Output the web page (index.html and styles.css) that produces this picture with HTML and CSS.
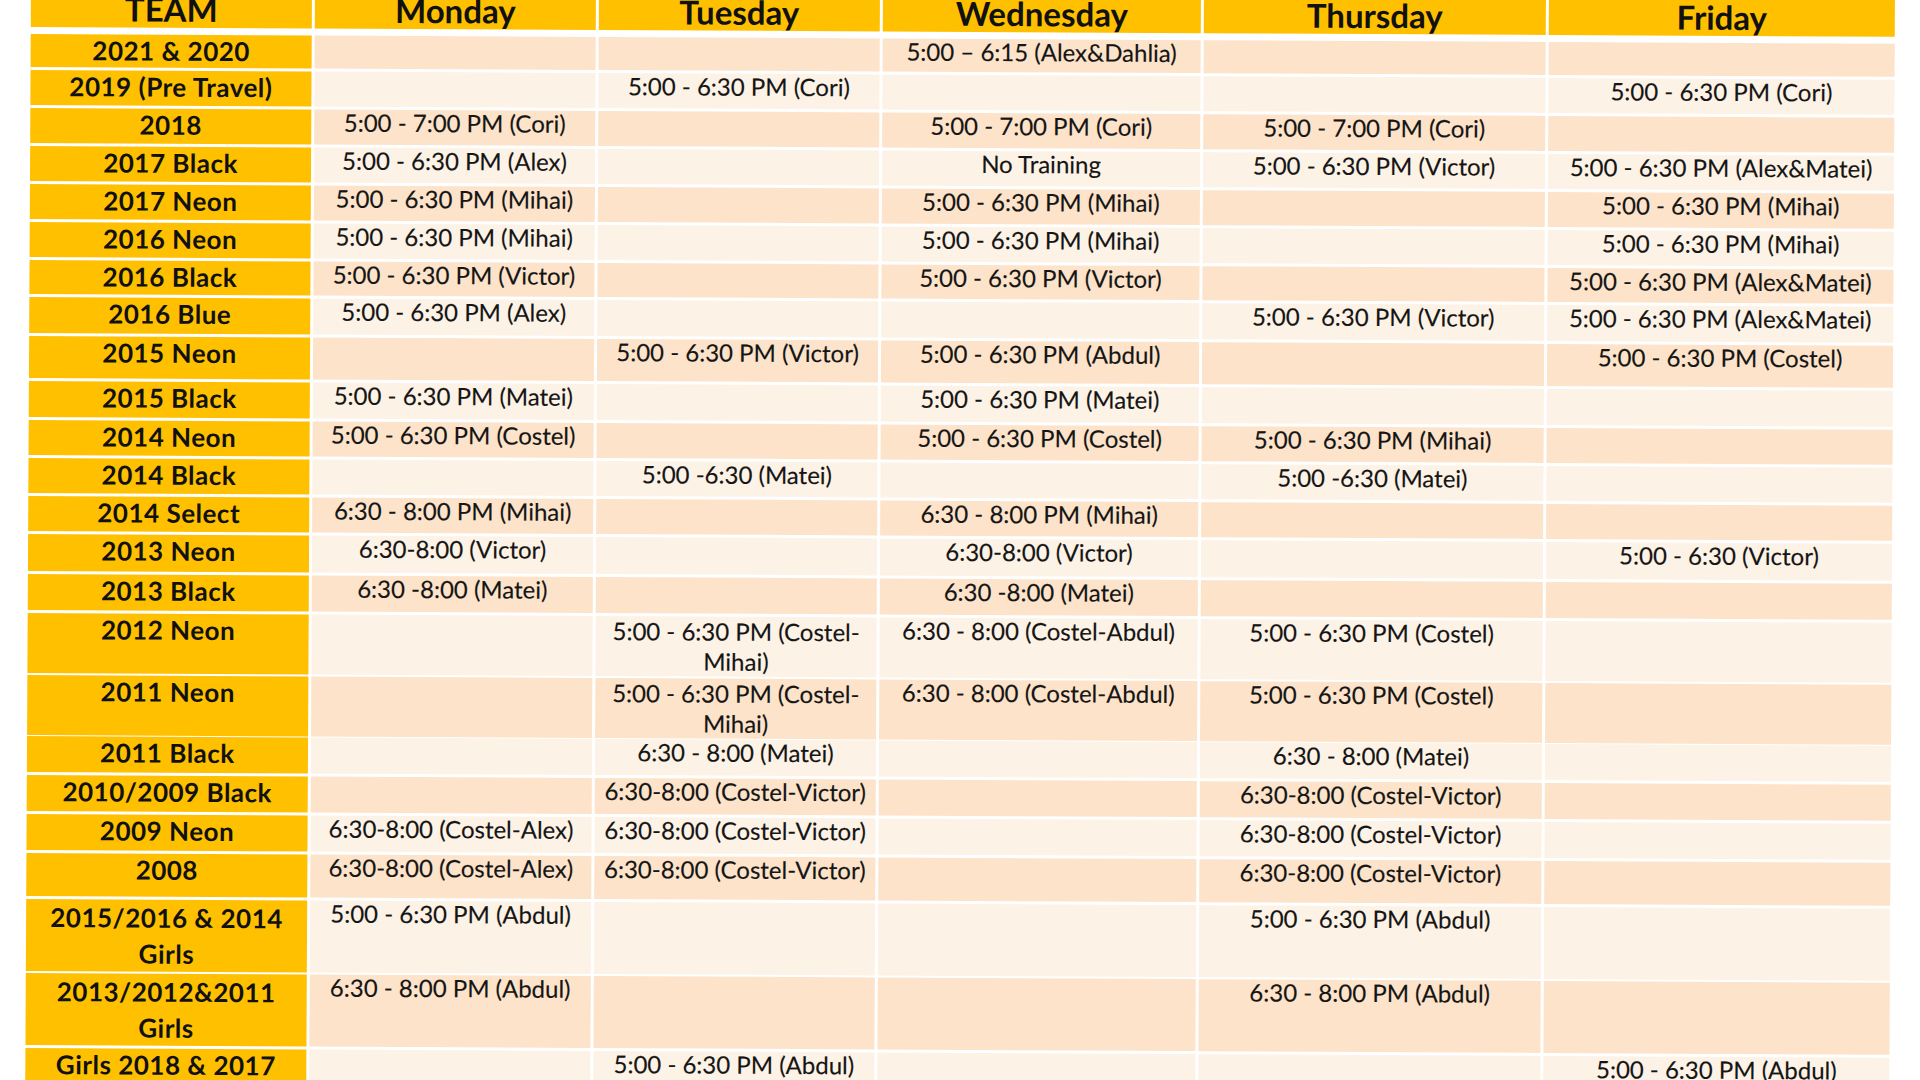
FILE: index.html
```
<!DOCTYPE html>
<html lang="en">
<head>
<meta charset="utf-8">
<title>Training Schedule</title>
<link rel="stylesheet" href="styles.css">
</head>
<body>
<div class="sheet">
  <div class="row head">
    <div class="cell">TEAM</div><div class="cell">Monday</div><div class="cell">Tuesday</div><div class="cell">Wednesday</div><div class="cell">Thursday</div><div class="cell">Friday</div>
  </div>
  <div class="row dark h33">
    <div class="cell team">2021 &amp; 2020</div><div class="cell"></div><div class="cell"></div><div class="cell">5:00 – 6:15 (Alex&amp;Dahlia)</div><div class="cell"></div><div class="cell"></div>
  </div>
  <div class="row light">
    <div class="cell team">2019 (Pre Travel)</div><div class="cell"></div><div class="cell">5:00 - 6:30 PM (Cori)</div><div class="cell"></div><div class="cell"></div><div class="cell">5:00 - 6:30 PM (Cori)</div>
  </div>
  <div class="row dark">
    <div class="cell team">2018</div><div class="cell">5:00 - 7:00 PM (Cori)</div><div class="cell"></div><div class="cell">5:00 - 7:00 PM (Cori)</div><div class="cell">5:00 - 7:00 PM (Cori)</div><div class="cell"></div>
  </div>
  <div class="row light">
    <div class="cell team">2017 Black</div><div class="cell">5:00 - 6:30 PM (Alex)</div><div class="cell"></div><div class="cell">No Training</div><div class="cell">5:00 - 6:30 PM (Victor)</div><div class="cell">5:00 - 6:30 PM (Alex&amp;Matei)</div>
  </div>
  <div class="row dark">
    <div class="cell team">2017 Neon</div><div class="cell">5:00 - 6:30 PM (Mihai)</div><div class="cell"></div><div class="cell">5:00 - 6:30 PM (Mihai)</div><div class="cell"></div><div class="cell">5:00 - 6:30 PM (Mihai)</div>
  </div>
  <div class="row light">
    <div class="cell team">2016 Neon</div><div class="cell">5:00 - 6:30 PM (Mihai)</div><div class="cell"></div><div class="cell">5:00 - 6:30 PM (Mihai)</div><div class="cell"></div><div class="cell">5:00 - 6:30 PM (Mihai)</div>
  </div>
  <div class="row dark h34">
    <div class="cell team">2016 Black</div><div class="cell">5:00 - 6:30 PM (Victor)</div><div class="cell"></div><div class="cell">5:00 - 6:30 PM (Victor)</div><div class="cell"></div><div class="cell">5:00 - 6:30 PM (Alex&amp;Matei)</div>
  </div>
  <div class="row light h36">
    <div class="cell team">2016 Blue</div><div class="cell">5:00 - 6:30 PM (Alex)</div><div class="cell"></div><div class="cell"></div><div class="cell">5:00 - 6:30 PM (Victor)</div><div class="cell">5:00 - 6:30 PM (Alex&amp;Matei)</div>
  </div>
  <div class="row dark h42">
    <div class="cell team">2015 Neon</div><div class="cell"></div><div class="cell">5:00 - 6:30 PM (Victor)</div><div class="cell">5:00 - 6:30 PM (Abdul)</div><div class="cell"></div><div class="cell">5:00 - 6:30 PM (Costel)</div>
  </div>
  <div class="row light h36">
    <div class="cell team">2015 Black</div><div class="cell">5:00 - 6:30 PM (Matei)</div><div class="cell"></div><div class="cell">5:00 - 6:30 PM (Matei)</div><div class="cell"></div><div class="cell"></div>
  </div>
  <div class="row dark">
    <div class="cell team">2014 Neon</div><div class="cell">5:00 - 6:30 PM (Costel)</div><div class="cell"></div><div class="cell">5:00 - 6:30 PM (Costel)</div><div class="cell">5:00 - 6:30 PM (Mihai)</div><div class="cell"></div>
  </div>
  <div class="row light">
    <div class="cell team">2014 Black</div><div class="cell"></div><div class="cell">5:00 -6:30 (Matei)</div><div class="cell"></div><div class="cell">5:00 -6:30 (Matei)</div><div class="cell"></div>
  </div>
  <div class="row dark">
    <div class="cell team">2014 Select</div><div class="cell">6:30 - 8:00 PM (Mihai)</div><div class="cell"></div><div class="cell">6:30 - 8:00 PM (Mihai)</div><div class="cell"></div><div class="cell"></div>
  </div>
  <div class="row light h37">
    <div class="cell team">2013 Neon</div><div class="cell">6:30-8:00 (Victor)</div><div class="cell"></div><div class="cell">6:30-8:00 (Victor)</div><div class="cell"></div><div class="cell">5:00 - 6:30 (Victor)</div>
  </div>
  <div class="row dark h36">
    <div class="cell team">2013 Black</div><div class="cell">6:30 -8:00 (Matei)</div><div class="cell"></div><div class="cell">6:30 -8:00 (Matei)</div><div class="cell"></div><div class="cell"></div>
  </div>
  <div class="row light h59">
    <div class="cell team">2012 Neon</div><div class="cell"></div><div class="cell wrap">5:00 - 6:30 PM (Costel-<br>Mihai)</div><div class="cell">6:30 - 8:00 (Costel-Abdul)</div><div class="cell">5:00 - 6:30 PM (Costel)</div><div class="cell"></div>
  </div>
  <div class="row dark h58">
    <div class="cell team">2011 Neon</div><div class="cell"></div><div class="cell wrap">5:00 - 6:30 PM (Costel-<br>Mihai)</div><div class="cell">6:30 - 8:00 (Costel-Abdul)</div><div class="cell">5:00 - 6:30 PM (Costel)</div><div class="cell"></div>
  </div>
  <div class="row light h36">
    <div class="cell team">2011 Black</div><div class="cell"></div><div class="cell">6:30 - 8:00 (Matei)</div><div class="cell"></div><div class="cell">6:30 - 8:00 (Matei)</div><div class="cell"></div>
  </div>
  <div class="row dark h36">
    <div class="cell team">2010/2009 Black</div><div class="cell"></div><div class="cell">6:30-8:00 (Costel-Victor)</div><div class="cell"></div><div class="cell">6:30-8:00 (Costel-Victor)</div><div class="cell"></div>
  </div>
  <div class="row light h36">
    <div class="cell team">2009 Neon</div><div class="cell">6:30-8:00 (Costel-Alex)</div><div class="cell">6:30-8:00 (Costel-Victor)</div><div class="cell"></div><div class="cell">6:30-8:00 (Costel-Victor)</div><div class="cell"></div>
  </div>
  <div class="row dark h43">
    <div class="cell team">2008</div><div class="cell">6:30-8:00 (Costel-Alex)</div><div class="cell">6:30-8:00 (Costel-Victor)</div><div class="cell"></div><div class="cell">6:30-8:00 (Costel-Victor)</div><div class="cell"></div>
  </div>
  <div class="row light h71">
    <div class="cell team two">2015/2016 &amp; 2014<br>Girls</div><div class="cell">5:00 - 6:30 PM (Abdul)</div><div class="cell"></div><div class="cell"></div><div class="cell">5:00 - 6:30 PM (Abdul)</div><div class="cell"></div>
  </div>
  <div class="row dark h72">
    <div class="cell team two">2013/2012&amp;2011<br>Girls</div><div class="cell">6:30 - 8:00 PM (Abdul)</div><div class="cell"></div><div class="cell"></div><div class="cell">6:30 - 8:00 PM (Abdul)</div><div class="cell"></div>
  </div>
  <div class="row light h40">
    <div class="cell team">Girls 2018 &amp; 2017</div><div class="cell"></div><div class="cell">5:00 - 6:30 PM (Abdul)</div><div class="cell"></div><div class="cell"></div><div class="cell">5:00 - 6:30 PM (Abdul)</div>
  </div>
</div>
</body>
</html>
```
FILE: styles.css
```
html, body {
  margin: 0;
  padding: 0;
  background: #ffffff;
  overflow: hidden;
  height: 100%;
}

body {
  font-family: Lato, "Open Sans", "Liberation Sans", sans-serif;
  color: #151515;
}

.sheet {
  display: flex;
  flex-direction: column;
  gap: 3px;
  width: max-content;
  margin: -17px 0 0 31px;
  transform: rotate(0.3deg);
  transform-origin: 0 0;
}

.row {
  display: grid;
  grid-template-columns: 281px 281px 281px 318px 342px 346px;
  column-gap: 3px;
  height: 35px;
}

.h33 { height: 33px; }
.h34 { height: 34px; }
.h36 { height: 36px; }
.h37 { height: 37px; }
.h40 { height: 40px; }
.h42 { height: 42px; }
.h43 { height: 43px; }
.h58 { height: 58px; }
.h59 { height: 59px; }
.h71 { height: 71px; }
.h72 { height: 72px; }

.cell {
  text-align: center;
  font-size: 24px;
  line-height: 26px;
  white-space: nowrap;
  -webkit-text-stroke: 0.15px currentColor;
}

.dark .cell { background: #fce3c9; }
.light .cell { background: #fdf2e6; }

.dark .cell.team,
.light .cell.team {
  background: #ffc000;
  font-weight: 700;
  font-size: 26px;
  line-height: 33px;
  letter-spacing: 0.5px;
  color: #111111;
  -webkit-text-stroke: 0;
}

.dark .cell.team.two,
.light .cell.team.two {
  line-height: 36px;
}

.head {
  height: 44px;
  margin-bottom: 4px;
}

.head .cell {
  background: #ffc000;
  font-weight: 700;
  font-size: 33px;
  line-height: 33px;
  color: #111111;
  display: flex;
  align-items: flex-end;
  justify-content: center;
  padding-bottom: 2px;
  box-sizing: border-box;
  -webkit-text-stroke: 0;
}

.wrap {
  line-height: 30px;
}
```
